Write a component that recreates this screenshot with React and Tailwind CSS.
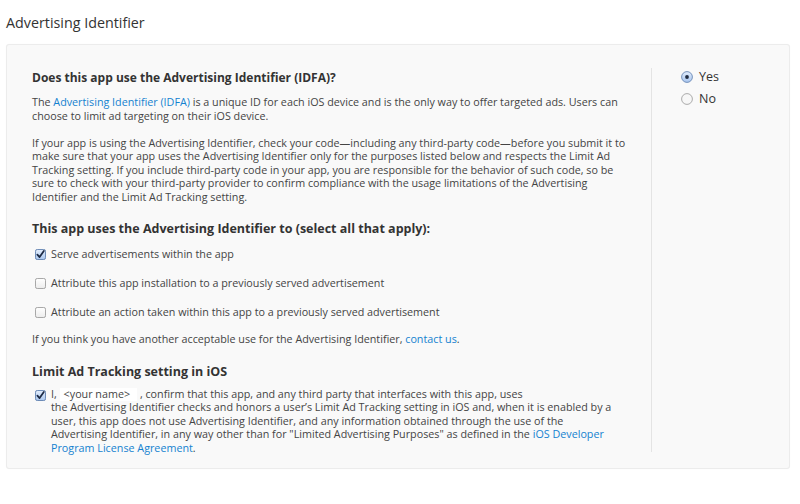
import React from "react";

const Box = ({ checked }) => (
  <svg width="11" height="11" viewBox="0 0 12 12" className="shrink-0">
    <defs>
      <linearGradient id="cbOn" x1="0" y1="0" x2="0" y2="1">
        <stop offset="0" stopColor="#e4eefc" />
        <stop offset="1" stopColor="#a9c6ee" />
      </linearGradient>
      <linearGradient id="cbOff" x1="0" y1="0" x2="0" y2="1">
        <stop offset="0" stopColor="#ffffff" />
        <stop offset="1" stopColor="#ececec" />
      </linearGradient>
    </defs>
    <rect
      x="0.5"
      y="0.5"
      width="11"
      height="11"
      rx="2"
      fill={checked ? "url(#cbOn)" : "url(#cbOff)"}
      stroke={checked ? "#5e7fae" : "#9c9c9c"}
    />
    {checked && (
      <path d="M2.6 6.2 L5 8.8 L9.6 2.2" fill="none" stroke="#1c2a44" strokeWidth="1.9" strokeLinecap="round" strokeLinejoin="round" />
    )}
  </svg>
);

const Radio = ({ checked }) => (
  <svg width="12" height="12" viewBox="0 0 12 12" className="shrink-0">
    <defs>
      <linearGradient id="rdOn" x1="0" y1="0" x2="0" y2="1">
        <stop offset="0" stopColor="#e2edfc" />
        <stop offset="1" stopColor="#a8c5ee" />
      </linearGradient>
    </defs>
    <circle cx="6" cy="6" r="5.4" fill={checked ? "url(#rdOn)" : "#f7f7f7"} stroke={checked ? "#6a88b5" : "#a3a3a3"} strokeWidth="0.9" />
    {checked && <circle cx="6" cy="6" r="1.9" fill="#1f2b40" />}
  </svg>
);

const Link = ({ children }) => <span className="text-[#1482d0]">{children}</span>;

const App = () => {
  return (
    <div className="w-[800px] h-[504px] bg-white text-[#444] font-['Open_Sans',sans-serif] overflow-hidden">
      <h1 className="pl-[6px] pt-[14px] text-[14.3px] leading-[18px] text-[#333]">Advertising Identifier</h1>
      <div className="mx-[6px] mt-[12px] w-[784px] flex bg-[#f9f9f9] border border-[#ececec] rounded-[3px] shadow-[0_0_1px_rgba(0,0,0,0.06)]">
        <div className="w-[644px] pl-[25px] pt-[25px] pb-[13px]">
          <h2 className="text-[12px] leading-[16px] font-bold text-[#333]">Does this app use the Advertising Identifier (IDFA)?</h2>
          <p className="mt-[10px] text-[10.75px] leading-[13.5px] whitespace-nowrap">
            The <Link>Advertising Identifier (IDFA)</Link> is a unique ID for each iOS device and is the only way to offer targeted ads. Users can
            <br />
            choose to limit ad targeting on their iOS device.
          </p>
          <p className="mt-[13.5px] text-[10.75px] leading-[13.5px] whitespace-nowrap">
            If your app is using the Advertising Identifier, check your code—including any third-party code—before you submit it to
            <br />
            make sure that your app uses the Advertising Identifier only for the purposes listed below and respects the Limit Ad
            <br />
            Tracking setting. If you include third-party code in your app, you are responsible for the behavior of such code, so be
            <br />
            sure to check with your third-party provider to confirm compliance with the usage limitations of the Advertising
            <br />
            Identifier and the Limit Ad Tracking setting.
          </p>
          <h2 className="mt-[17px] text-[12.5px] leading-[16px] font-bold text-[#333]">
            This app uses the Advertising Identifier to (select all that apply):
          </h2>
          <div className="mt-[9px] flex flex-col gap-[13px] pl-[3px]">
            <label className="flex items-center gap-[5px] h-[16px] text-[10.75px]">
              <Box checked />
              <span>Serve advertisements within the app</span>
            </label>
            <label className="flex items-center gap-[5px] h-[16px] text-[10.75px]">
              <Box />
              <span>Attribute this app installation to a previously served advertisement</span>
            </label>
            <label className="flex items-center gap-[5px] h-[16px] text-[10.75px]">
              <Box />
              <span>Attribute an action taken within this app to a previously served advertisement</span>
            </label>
          </div>
          <p className="mt-[13px] text-[10.75px] leading-[13.5px]">
            If you think you have another acceptable use for the Advertising Identifier, <Link>contact us</Link>.
          </p>
          <h2 className="mt-[17px] text-[12.5px] leading-[16px] font-bold text-[#333]">Limit Ad Tracking setting in iOS</h2>
          <div className="mt-[8px] flex gap-[5px] pl-[3px]">
            <div className="pt-[2px]">
              <Box checked />
            </div>
            <p className="text-[10.75px] leading-[13.5px] whitespace-nowrap">
              I,{" "}
              <span className="inline-block bg-white pl-[4px] pr-[7px] leading-[13px]">&lt;your name&gt;</span>{" "}
              , confirm that this app, and any third party that interfaces with this app, uses
              <br />
              the Advertising Identifier checks and honors a user’s Limit Ad Tracking setting in iOS and, when it is enabled by a
              <br />
              user, this app does not use Advertising Identifier, and any information obtained through the use of the
              <br />
              Advertising Identifier, in any way other than for "Limited Advertising Purposes" as defined in the <Link>iOS Developer</Link>
              <br />
              <Link>Program License Agreement</Link>.
            </p>
          </div>
        </div>
        <div className="flex-1 mt-[23px] mb-[16px] border-l border-[#e4e4e4] pl-[29px]">
          <label className="mt-[1px] flex items-center gap-[6px] h-[16px] text-[12.5px] text-[#333]">
            <Radio checked />
            <span>Yes</span>
          </label>
          <label className="mt-[6px] flex items-center gap-[6px] h-[16px] text-[12.5px] text-[#333]">
            <Radio />
            <span>No</span>
          </label>
        </div>
      </div>
    </div>
  );
};

export default App;
